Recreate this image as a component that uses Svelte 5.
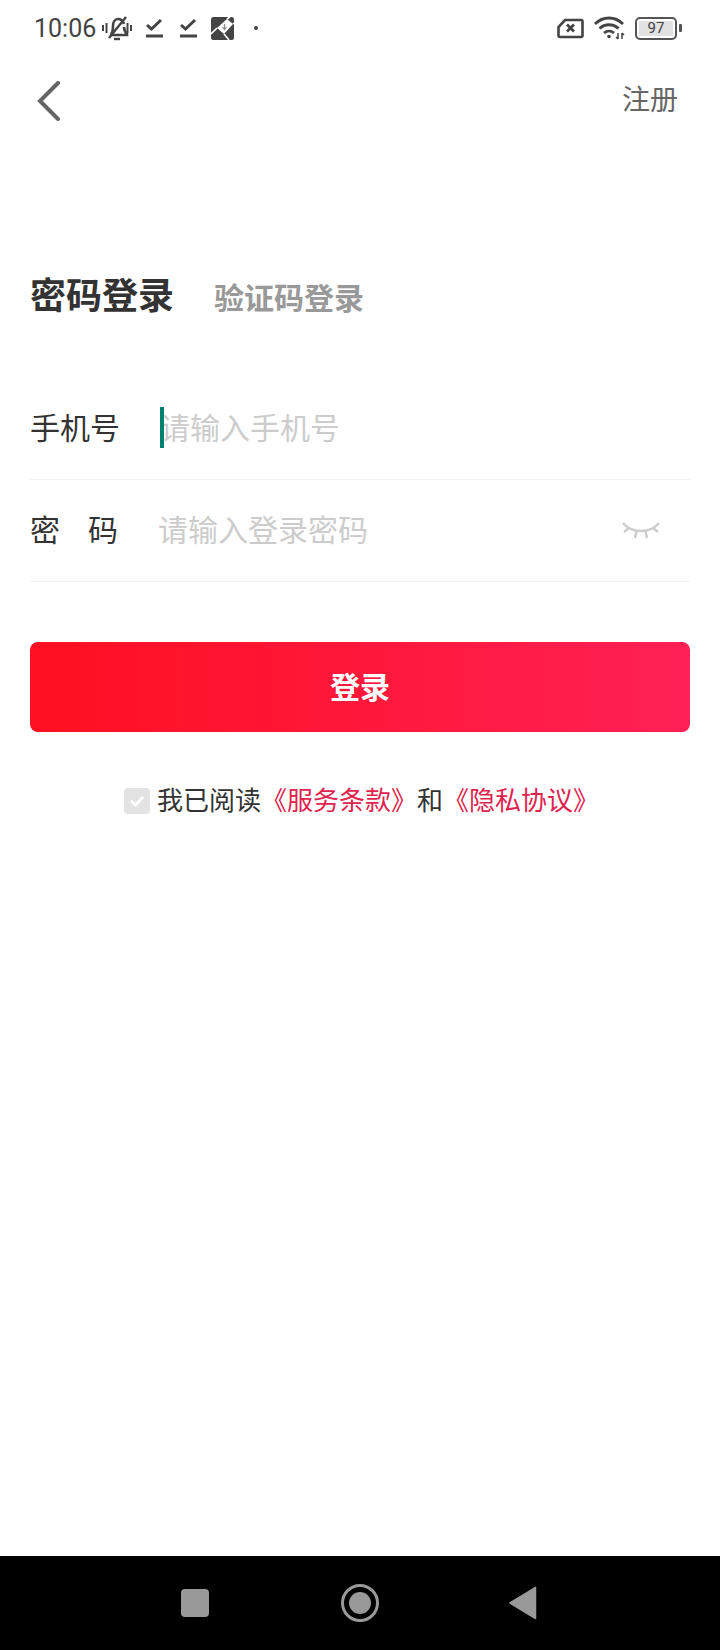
<script>
  let phone = $state('')
  let password = $state('')
  let agreed = $state(true)
</script>

<div class="page">
  <div class="status">
    <span class="time">10:06</span>
    <svg class="ic bell" width="30" height="26" viewBox="0 0 30 26" fill="none" stroke="#444">
      <path d="M1 10v6M4.500 8v10M25.500 8v10M29 10v6" stroke-width="2"/>
      <path d="M9 19c2-2 2-5 2-8 0-4 2-7 5-7s5 2 6 5M22 12c0 3 1 5 3 7v1H8" stroke-width="2.600"/>
      <path d="M12 24h6" stroke-width="2.400"/>
      <path d="M7 23 24 2" stroke-width="2.400"/>
    </svg>
    <svg class="ic check1" width="17" height="20" viewBox="0 0 17 20" fill="none" stroke="#444" stroke-width="3">
      <path d="M1 7l4.500 4L15 2"/>
      <path d="M0 18h17"/>
    </svg>
    <svg class="ic check2" width="17" height="20" viewBox="0 0 17 20" fill="none" stroke="#444" stroke-width="3">
      <path d="M1 7l4.500 4L15 2"/>
      <path d="M0 18h17"/>
    </svg>
    <svg class="ic tile" width="23" height="23" viewBox="0 0 23 23">
      <rect width="23" height="23" rx="2.500" fill="#444"/>
      <path d="M16 2l6 5-9 10-7-6z" fill="#fff"/>
      <path d="M16 2l3-2M6 11l-6 6M13 17l5 6M22 7l1-1" stroke="#fff" stroke-width="1.600"/>
      <path d="M13.500 7v5M11.500 10l2 2.500 2-2.500" stroke="#888" stroke-width="1.200" fill="none"/>
    </svg>
    <span class="dot"></span>
    <div class="right">
      <svg width="27" height="21" viewBox="0 0 27 21" fill="none">
        <path d="M8 2h16a1.500 1.500 0 0 1 1.500 1.500v14a1.500 1.500 0 0 1-1.500 1.500H3a1.500 1.500 0 0 1-1.500-1.500V9z" stroke="#444" stroke-width="2.600"/>
        <path d="M10 6.500l7 7M17 6.500l-7 7" stroke="#444" stroke-width="2.800"/>
      </svg>
      <svg class="wifi" width="31" height="24" viewBox="0 0 31 24" fill="none" stroke="#444" stroke-width="2.800">
        <path d="M1 8c8-8 20-8 28 0"/>
        <path d="M5.500 12.500c5.500-5 13.500-5 19 0"/>
        <path d="M10 17c3-2.500 7-2.500 10 0"/>
        <circle cx="15" cy="20.500" r="1.800" fill="#444" stroke="none"/>
        <path d="M24 17v6M22 21l2 2M28 23v-6M30 19l-2-2" stroke-width="1.500"/>
      </svg>
      <div class="battery">
        <div class="cell"><span class="level">97</span></div>
        <span class="nub"></span>
      </div>
    </div>
  </div>

  <div class="nav">
    <button class="back" aria-label="返回">
      <svg width="24" height="40" viewBox="0 0 24 40" fill="none">
        <path d="M21 2 3 20l18 18" stroke="#666" stroke-width="4" stroke-linecap="round"/>
      </svg>
    </button>
    <span class="register">注册</span>
  </div>

  <div class="tabs">
    <span class="tab on">密码登录</span>
    <span class="tab alt">验证码登录</span>
  </div>

  <div class="form">
    <label class="field">
      <span class="label">手机号</span>
      <span class="wrap">
        <span class="cursor"></span>
        <input bind:value={phone} placeholder="请输入手机号" />
      </span>
    </label>
    <label class="field">
      <span class="label spaced"><span>密</span><span>码</span></span>
      <span class="wrap pwd">
        <input type="password" bind:value={password} placeholder="请输入登录密码" />
      </span>
      <svg class="eye" width="38" height="18" viewBox="0 0 38 18" fill="none" stroke="#ccc" stroke-width="2.400">
        <path d="M1 1c5 6 11 8 18 8s13-2 18-8"/>
        <path d="M2 10l5-4M13 16l1.500-7M25 16l-1.500-7M36 10l-5-4"/>
      </svg>
    </label>
  </div>

  <button class="login">登录</button>

  <div class="agree">
    <button class="box" class:off={!agreed} aria-label="同意" onclick={() => (agreed = !agreed)}>
      <svg width="16" height="12" viewBox="0 0 16 12" fill="none">
        <path d="M2 6l4.500 4L14 2" stroke="#fff" stroke-width="2.800"/>
      </svg>
    </button>
    <span class="txt">我已阅读</span><span class="link">《服务条款》</span><span class="txt">和</span><span class="link">《隐私协议》</span>
  </div>

  <div class="spacer"></div>

  <div class="navbar">
    <span class="square"></span>
    <span class="home"><span></span></span>
    <svg width="28" height="34" viewBox="0 0 28 34">
      <path d="M26.500 1.500v31L1 17z" fill="#999" stroke="#999" stroke-width="1.500" stroke-linejoin="round"/>
    </svg>
  </div>
</div>

<style>
  :global(body) {
    margin: 0;
    background: #fff;
  }
  .page {
    width: 720px;
    height: 1650px;
    display: flex;
    flex-direction: column;
    font-family: "Noto Sans CJK SC", "Liberation Sans", sans-serif;
    overflow: hidden;
  }
  .status {
    height: 56px;
    display: flex;
    align-items: center;
    padding: 0 38px 0 34px;
    color: #444;
  }
  .time {
    font-family: Roboto, sans-serif;
    font-size: 25px;
    width: 68px;
  }
  .ic {
    flex: none;
  }
  .check1 {
    margin-left: 14px;
  }
  .check2 {
    margin-left: 17px;
  }
  .tile {
    margin-left: 14px;
  }
  .dot {
    width: 4px;
    height: 4px;
    border-radius: 50%;
    background: #444;
    margin-left: 20px;
  }
  .right {
    margin-left: auto;
    display: flex;
    align-items: center;
    gap: 10px;
  }
  .battery {
    display: flex;
    align-items: center;
    gap: 2px;
  }
  .cell {
    width: 34px;
    height: 15px;
    border: 2.500px solid #555;
    border-radius: 5px;
    padding: 2px;
    display: flex;
    box-sizing: content-box;
  }
  .level {
    flex: 1;
    background: #e2e2e2;
    font-family: Roboto, sans-serif;
    font-size: 15px;
    line-height: 15px;
    text-align: center;
    color: #444;
  }
  .nub {
    width: 3px;
    height: 8px;
    background: #555;
    border-radius: 1px;
  }
  .nav {
    height: 88px;
    display: flex;
    align-items: center;
    justify-content: space-between;
    padding: 0 42px 0 37px;
  }
  .back {
    background: none;
    border: 0;
    padding: 2px 0 0;
    display: flex;
  }
  .register {
    font-size: 28px;
    color: #666;
    padding-bottom: 4px;
  }
  .tabs {
    margin-top: 122px;
    padding-left: 30px;
    display: flex;
    align-items: baseline;
    gap: 40px;
    height: 54px;
    line-height: 54px;
  }
  .tab {
    font-size: 30px;
    font-weight: 700;
    color: #999;
  }
  .tab.alt {
    margin-top: -1px;
  }
  .tab.on {
    font-size: 36px;
    color: #333;
  }
  .form {
    margin: 58px 30px 0;
  }
  .field {
    height: 101px;
    border-bottom: 1px solid #f2f2f2;
    display: flex;
    align-items: center;
    font-size: 30px;
  }
  .label {
    width: 130px;
    flex: none;
    color: #333;
    padding-bottom: 6px;
  }
  .spaced {
    display: flex;
    justify-content: space-between;
    width: 88px;
    margin-right: 42px;
  }
  .wrap {
    position: relative;
    flex: 1;
    display: flex;
    align-items: center;
    padding-bottom: 6px;
  }
  .pwd {
    margin-left: -2px;
  }
  .cursor {
    position: absolute;
    left: 0;
    top: 50%;
    width: 4px;
    height: 41px;
    margin-top: -22px;
    background: #00806e;
  }
  input {
    width: 100%;
    border: 0;
    outline: 0;
    padding: 0;
    font: inherit;
    color: #333;
    background: none;
  }
  input::placeholder {
    color: #ccc;
    opacity: 1;
  }
  .eye {
    flex: none;
    margin-right: 30px;
  }
  .login {
    margin: 60px 30px 0;
    height: 90px;
    flex: none;
    border: 0;
    border-radius: 8px;
    background: linear-gradient(90deg, #ff1020, #ff2055);
    color: #fff;
    font: 700 30px "Noto Sans CJK SC", sans-serif;
    padding: 0 0 4px;
  }
  .agree {
    margin-top: 53px;
    padding-left: 124px;
    display: flex;
    align-items: center;
    height: 32px;
    font-size: 26px;
  }
  .txt, .link {
    padding-bottom: 6px;
  }
  .box {
    width: 26px;
    height: 26px;
    border: 0;
    padding: 0;
    margin-right: 7px;
    border-radius: 4px;
    background: #e3e3e3;
    display: flex;
    align-items: center;
    justify-content: center;
  }
  .box.off svg {
    visibility: hidden;
  }
  .txt {
    color: #333;
  }
  .link {
    color: #e0234e;
  }
  .spacer {
    flex: 1;
  }
  .navbar {
    height: 94px;
    flex: none;
    background: #000;
    display: flex;
    align-items: center;
    padding-left: 181px;
    gap: 0;
  }
  .square {
    width: 28px;
    height: 28px;
    border-radius: 4px;
    background: #999;
  }
  .home {
    width: 38px;
    height: 38px;
    box-sizing: border-box;
    border: 3.500px solid #999;
    border-radius: 50%;
    margin: 0 130px 0 132px;
    display: flex;
    align-items: center;
    justify-content: center;
  }
  .home span {
    width: 22px;
    height: 22px;
    border-radius: 50%;
    background: #999;
  }
</style>
